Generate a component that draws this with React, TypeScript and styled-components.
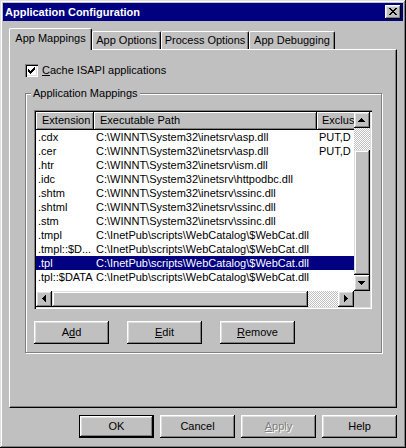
import React from "react";
import styled, { createGlobalStyle, css } from "styled-components";

const GlobalStyle = createGlobalStyle`
  html, body { margin: 0; padding: 0; background: #c0c0c0; }
  body {
    font-family: "Liberation Sans", Arial, sans-serif;
    font-size: 11px;
    color: #000;
  }
  * { box-sizing: border-box; }
`;

const raisedBevel = css`
  box-shadow: inset -1px -1px #000, inset 1px 1px #fff, inset -2px -2px #808080,
    inset 2px 2px #dfdfdf;
`;

const Window = styled.div`
  width: 406px;
  height: 448px;
  padding: 3px;
  background: #c0c0c0;
  box-shadow: inset -1px -1px #000, inset 1px 1px #dfdfdf, inset -2px -2px #808080,
    inset 2px 2px #fff;
  display: flex;
  flex-direction: column;
`;

const TitleBar = styled.div`
  height: 18px;
  background: #000080;
  display: flex;
  align-items: center;
  justify-content: space-between;
  padding: 0 2px;
`;

const Title = styled.span`
  color: #fff;
  font-weight: bold;
  font-size: 11px;
  line-height: 13px;
`;

const CloseButton = styled.div`
  width: 16px;
  height: 14px;
  background: #c0c0c0;
  ${raisedBevel};
`;

const Body = styled.div`
  padding: 7px 6px 0 6px;
  display: flex;
  flex-direction: column;
`;

const TabStrip = styled.div`
  height: 21px;
  display: flex;
  align-items: flex-end;
`;

const Tab = styled.div<{ $active?: boolean; $w: number }>`
  width: ${(p) => p.$w}px;
  height: ${(p) => (p.$active ? 22 : 18)}px;
  margin-bottom: ${(p) => (p.$active ? -1 : 0)}px;
  position: relative;
  z-index: ${(p) => (p.$active ? 2 : 0)};
  background: #c0c0c0;
  border-top: 1px solid #fff;
  border-left: 1px solid #fff;
  border-right: 1px solid #000;
  border-top-left-radius: 2px;
  border-top-right-radius: 2px;
  box-shadow: inset -1px 0 #808080;
  display: flex;
  align-items: center;
  justify-content: center;
  padding-bottom: ${(p) => (p.$active ? 3 : 0)}px;
  line-height: 13px;
  white-space: nowrap;
`;

const Panel = styled.div`
  position: relative;
  z-index: 1;
  width: 388px;
  height: 359px;
  border-top: 1px solid #fff;
  border-left: 1px solid #fff;
  border-right: 1px solid #000;
  border-bottom: 1px solid #000;
  box-shadow: inset -1px -1px #808080;
  padding: 14px 0 0 15px;
  display: flex;
  flex-direction: column;
`;

const CheckRow = styled.label`
  display: flex;
  align-items: center;
  gap: 4px;
  height: 13px;
  line-height: 13px;
`;

const CheckBox = styled.span`
  width: 13px;
  height: 13px;
  background: #fff;
  box-shadow: inset 1px 1px #808080, inset 2px 2px #000, inset -1px -1px #fff,
    inset -2px -2px #dfdfdf;
  display: flex;
  align-items: center;
  justify-content: center;
`;

const GroupBox = styled.div`
  position: relative;
  width: 357px;
  height: 260px;
  margin-top: 16px;
  border: 1px solid #808080;
  box-shadow: inset 1px 1px #fff, 1px 1px #fff;
  padding: 16px 0 0 8px;
  display: flex;
  flex-direction: column;
`;

const Legend = styled.span`
  position: absolute;
  top: -7px;
  left: 5px;
  padding: 0 2px;
  background: #c0c0c0;
  line-height: 13px;
`;

const ListView = styled.div`
  width: 338px;
  height: 199px;
  padding: 2px;
  background: #fff;
  box-shadow: inset 1px 1px #808080, inset 2px 2px #000, inset -1px -1px #fff,
    inset -2px -2px #dfdfdf;
  display: grid;
  grid-template-columns: 318px 16px;
  grid-template-rows: 179px 16px;
`;

const ListContent = styled.div`
  overflow: hidden;
  background: #fff;
`;

const HeaderRow = styled.div`
  display: flex;
  height: 18px;
`;

const HeaderCell = styled.div<{ $w: number; $pad?: number }>`
  flex: 0 0 ${(p) => p.$w}px;
  height: 18px;
  background: #c0c0c0;
  box-shadow: inset -1px -1px #000, inset 1px 1px #fff, inset -2px -2px #808080;
  padding-left: ${(p) => p.$pad ?? 6}px;
  line-height: 17px;
  white-space: nowrap;
  overflow: hidden;
`;

const Row = styled.div<{ $selected?: boolean }>`
  display: flex;
  width: max-content;
  height: 14px;
  line-height: 14px;
  background: ${(p) => (p.$selected ? "#000080" : "transparent")};
  color: ${(p) => (p.$selected ? "#fff" : "#000")};
`;

const Cell = styled.div<{ $w: number; $pad?: number }>`
  flex: 0 0 ${(p) => p.$w}px;
  padding-left: ${(p) => p.$pad ?? 2}px;
  white-space: nowrap;
  overflow: hidden;
`;

const VScroll = styled.div`
  display: flex;
  flex-direction: column;
`;

const HScroll = styled.div`
  display: flex;
`;

const ScrollButton = styled.div`
  flex: 0 0 16px;
  width: 16px;
  height: 16px;
  background: #c0c0c0;
  ${raisedBevel};
`;

const Track = styled.div<{ $size: number }>`
  flex: 0 0 ${(p) => p.$size}px;
  background-color: #fff;
  background-image: repeating-conic-gradient(#c0c0c0 0% 25%, #fff 0% 50%);
  background-size: 2px 2px;
`;

const Thumb = styled.div<{ $size: number }>`
  flex: 0 0 ${(p) => p.$size}px;
  background: #c0c0c0;
  box-shadow: inset -1px -1px #000, inset 1px 1px #dfdfdf, inset -2px -2px #808080,
    inset 2px 2px #fff;
`;

const Corner = styled.div`
  background: #c0c0c0;
`;

const ButtonRow = styled.div<{ $gap: number; $top: number; $end?: boolean }>`
  display: flex;
  gap: ${(p) => p.$gap}px;
  margin-top: ${(p) => p.$top}px;
  justify-content: ${(p) => (p.$end ? "flex-end" : "flex-start")};
`;

const PushButton = styled.button<{ $default?: boolean }>`
  width: 75px;
  height: 23px;
  padding: 0;
  margin: 0;
  border: none;
  background: #c0c0c0;
  font-family: "Liberation Sans", Arial, sans-serif;
  font-size: 11px;
  color: #000;
  line-height: 13px;
  ${(p) =>
    p.$default
      ? css`
          box-shadow: inset 0 0 0 1px #000, inset -2px -2px #000, inset 2px 2px #fff,
            inset -3px -3px #808080, inset 3px 3px #dfdfdf;
        `
      : raisedBevel};
  &:disabled {
    color: #808080;
    text-shadow: 1px 1px #fff;
  }
`;

type Span = [number, number, number];

const PixelIcon: React.FC<{ w: number; h: number; spans: Span[] }> = ({ w, h, spans }) => (
  <svg width={w} height={h} viewBox={`0 0 ${w} ${h}`} shapeRendering="crispEdges" style={{ display: "block" }}>
    {spans.map(([x, y, len], i) => (
      <rect key={i} x={x} y={y} width={len} height={1} fill="#000" />
    ))}
  </svg>
);

const checkSpans: Span[] = [
  [6, 0, 1],
  [5, 1, 2],
  [0, 2, 1],
  [4, 2, 3],
  [0, 3, 2],
  [3, 3, 3],
  [0, 4, 5],
  [1, 5, 3],
  [2, 6, 1],
];

const closeSpans: Span[] = [
  [4, 3, 2], [10, 3, 2],
  [5, 4, 2], [9, 4, 2],
  [6, 5, 4],
  [7, 6, 2],
  [6, 7, 4],
  [5, 8, 2], [9, 8, 2],
  [4, 9, 2], [10, 9, 2],
];

const arrows: Record<string, Span[]> = {
  up: [[7, 6, 1], [6, 7, 3], [5, 8, 5], [4, 9, 7]],
  down: [[4, 6, 7], [5, 7, 5], [6, 8, 3], [7, 9, 1]],
  left: [[9, 4, 1], [8, 5, 2], [7, 6, 3], [6, 7, 4], [7, 8, 3], [8, 9, 2], [9, 10, 1]],
  right: [[6, 4, 1], [6, 5, 2], [6, 6, 3], [6, 7, 4], [6, 8, 3], [6, 9, 2], [6, 10, 1]],
};

const Arrow: React.FC<{ dir: "up" | "down" | "left" | "right" }> = ({ dir }) => (
  <ScrollButton>
    <PixelIcon w={16} h={16} spans={arrows[dir]} />
  </ScrollButton>
);

const COLS = [58, 223, 80];

const rows = [
  [".cdx", "C:\\WINNT\\System32\\inetsrv\\asp.dll", "PUT,D"],
  [".cer", "C:\\WINNT\\System32\\inetsrv\\asp.dll", "PUT,D"],
  [".htr", "C:\\WINNT\\System32\\inetsrv\\ism.dll", ""],
  [".idc", "C:\\WINNT\\System32\\inetsrv\\httpodbc.dll", ""],
  [".shtm", "C:\\WINNT\\System32\\inetsrv\\ssinc.dll", ""],
  [".shtml", "C:\\WINNT\\System32\\inetsrv\\ssinc.dll", ""],
  [".stm", "C:\\WINNT\\System32\\inetsrv\\ssinc.dll", ""],
  [".tmpl", "C:\\InetPub\\scripts\\WebCatalog\\$WebCat.dll", ""],
  [".tmpl::$D...", "C:\\InetPub\\scripts\\WebCatalog\\$WebCat.dll", ""],
  [".tpl", "C:\\InetPub\\scripts\\WebCatalog\\$WebCat.dll", ""],
  [".tpl::$DATA", "C:\\InetPub\\scripts\\WebCatalog\\$WebCat.dll", ""],
];

const tabs = [
  { label: "App Mappings", w: 83, active: true },
  { label: "App Options", w: 69 },
  { label: "Process Options", w: 88 },
  { label: "App Debugging", w: 86 },
];

export default function App() {
  return (
    <>
      <GlobalStyle />
      <Window>
        <TitleBar>
          <Title>Application Configuration</Title>
          <CloseButton>
            <PixelIcon w={16} h={14} spans={closeSpans} />
          </CloseButton>
        </TitleBar>
        <Body>
          <TabStrip>
            {tabs.map((t) => (
              <Tab key={t.label} $w={t.w} $active={t.active}>
                {t.label}
              </Tab>
            ))}
          </TabStrip>
          <Panel>
            <CheckRow>
              <CheckBox>
                <PixelIcon w={7} h={7} spans={checkSpans} />
              </CheckBox>
              <span>
                <u>C</u>ache ISAPI applications
              </span>
            </CheckRow>
            <GroupBox>
              <Legend>Application Mappings</Legend>
              <ListView>
                <ListContent>
                  <HeaderRow>
                    <HeaderCell $w={COLS[0]}>Extension</HeaderCell>
                    <HeaderCell $w={COLS[1]}>Executable Path</HeaderCell>
                    <HeaderCell $w={COLS[2]} $pad={5}>
                      Exclus
                    </HeaderCell>
                  </HeaderRow>
                  {rows.map((r, i) => (
                    <Row key={i} $selected={i === 9}>
                      <Cell $w={COLS[0]}>{r[0]}</Cell>
                      <Cell $w={COLS[1]}>{r[1]}</Cell>
                      <Cell $w={COLS[2]}>{r[2]}</Cell>
                    </Row>
                  ))}
                </ListContent>
                <VScroll>
                  <Arrow dir="up" />
                  <Track $size={22} />
                  <Thumb $size={125} />
                  <Arrow dir="down" />
                </VScroll>
                <HScroll>
                  <Arrow dir="left" />
                  <Thumb $size={256} />
                  <Track $size={30} />
                  <Arrow dir="right" />
                </HScroll>
                <Corner />
              </ListView>
              <ButtonRow $gap={18} $top={12}>
                <PushButton>
                  A<u>d</u>d
                </PushButton>
                <PushButton>
                  <u>E</u>dit
                </PushButton>
                <PushButton>
                  <u>R</u>emove
                </PushButton>
              </ButtonRow>
            </GroupBox>
          </Panel>
          <ButtonRow $gap={6} $top={7} $end>
            <PushButton $default>OK</PushButton>
            <PushButton>Cancel</PushButton>
            <PushButton disabled>
              <u>A</u>pply
            </PushButton>
            <PushButton>Help</PushButton>
          </ButtonRow>
        </Body>
      </Window>
    </>
  );
}
